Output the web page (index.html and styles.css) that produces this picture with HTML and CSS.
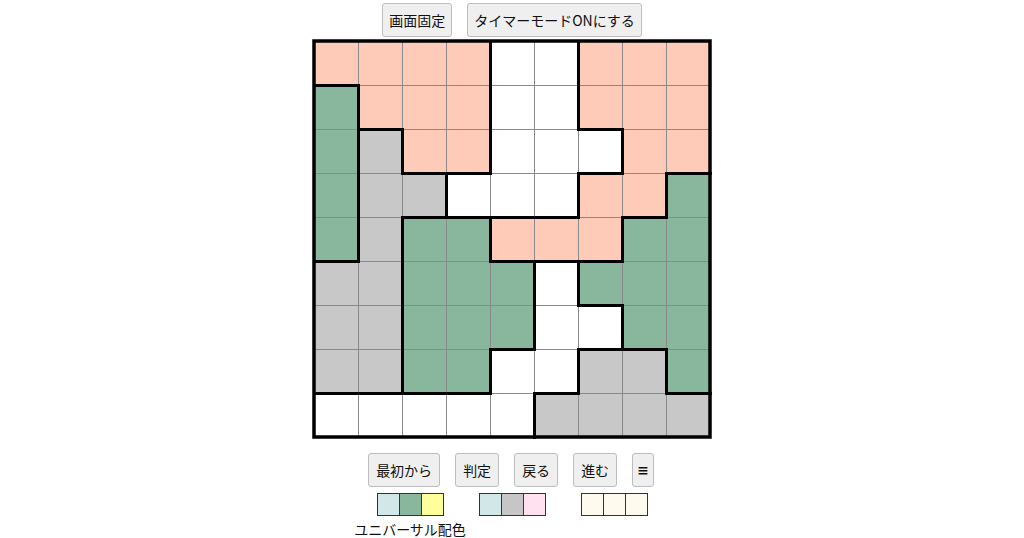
FILE: index.html
```html
<!DOCTYPE html>
<html lang="ja">
<head>
<meta charset="utf-8">
<title>パズル</title>
<link rel="stylesheet" href="styles.css">
</head>
<body>
<div class="page">
  <div class="toolbar top">
    <button class="btn">画面固定</button>
    <button class="btn">タイマーモードONにする</button>
  </div>
  <div class="board" id="board"></div>
  <div class="toolbar bottom">
    <button class="btn">最初から</button>
    <button class="btn">判定</button>
    <button class="btn">戻る</button>
    <button class="btn">進む</button>
    <button class="btn narrow">≡</button>
  </div>
  <div class="palettes">
    <div class="palette">
      <div class="swatches">
        <span class="sw c-cyan"></span><span class="sw c-green"></span><span class="sw c-yellow"></span>
      </div>
      <div class="caption">ユニバーサル配色</div>
    </div>
    <div class="palette">
      <div class="swatches">
        <span class="sw c-cyan"></span><span class="sw c-gray"></span><span class="sw c-pink"></span>
      </div>
    </div>
    <div class="palette">
      <div class="swatches">
        <span class="sw c-cream"></span><span class="sw c-cream"></span><span class="sw c-cream"></span>
      </div>
    </div>
  </div>
</div>
<script src="script.js"></script>
</body>
</html>
```

FILE: styles.css
```css
html, body {
  margin: 0;
  padding: 0;
  background: #ffffff;
}
body {
  font-family: "Noto Sans CJK JP", "Noto Sans", sans-serif;
  color: #000;
}
.page {
  width: 1024px;
  display: flex;
  flex-direction: column;
  align-items: center;
}
.toolbar {
  display: flex;
  justify-content: center;
}
.toolbar.top {
  margin-top: 3px;
  gap: 15px;
}
.toolbar.top .btn {
  padding: 6px 6px;
}
.toolbar.bottom {
  margin-top: 13px;
  gap: 15px;
  margin-left: -2px;
}
.btn {
  font-family: "Noto Sans CJK JP", "Noto Sans", sans-serif;
  font-size: 14px;
  line-height: 20px;
  padding: 6px 7px;
  border: 1px solid #bdbdbd;
  border-radius: 3px;
  background: #efefef;
  color: #111;
  margin: 0;
}
.toolbar.bottom .btn.narrow {
  padding: 6px 4px;
  font-family: "DejaVu Sans", sans-serif;
  font-weight: bold;
}
.board {
  margin-top: 2px;
  width: 400px;
  height: 401px;
}
.board svg {
  display: block;
}
.palettes {
  margin-top: 6px;
  display: flex;
  justify-content: center;
}
.palette {
  width: 102px;
  display: flex;
  flex-direction: column;
  align-items: center;
}
.swatches {
  display: flex;
  border: 1px solid #333;
  background: #333;
  gap: 1px;
}
.sw {
  display: block;
  width: 21px;
  height: 21px;
}
.c-cyan { background: #d2e7e8; }
.c-green { background: #89b79e; }
.c-yellow { background: #ffff9c; }
.c-gray { background: #c6c6c6; }
.c-pink { background: #ffe1ef; }
.c-cream { background: #fffaee; }
.caption {
  margin-top: 3px;
  font-size: 14px;
  line-height: 20px;
  white-space: nowrap;
  color: #111;
}
```

FILE: script.js
```js
(function () {
  var rows = [
    "PPPPWWPPP",
    "GPPPWWPPP",
    "GYPPWWWPP",
    "GYYWWWPPG",
    "GYGGPPPGG",
    "YYGGGWGGG",
    "YYGGGWWGG",
    "YYGGWWYYG",
    "WWWWWYYYY"
  ];
  var colors = { P: "#ffcbb9", G: "#89b79e", Y: "#c8c8c8", W: "#ffffff" };
  var S = 44, O = 2, N = 9;
  var out = [];
  out.push('<svg xmlns="http://www.w3.org/2000/svg" width="400" height="401" viewBox="0 0 400 401">');
  for (var r = 0; r < N; r++) {
    for (var c = 0; c < N; c++) {
      out.push('<rect x="' + (O + c * S) + '" y="' + (O + r * S) + '" width="' + S + '" height="' + S + '" fill="' + colors[rows[r][c]] + '"/>');
    }
  }
  for (var k = 1; k < N; k++) {
    var p = O + k * S + 0.5;
    out.push('<line x1="' + p + '" y1="' + O + '" x2="' + p + '" y2="' + (O + N * S) + '" stroke="#8a8a8a" stroke-width="1"/>');
    out.push('<line x1="' + O + '" y1="' + p + '" x2="' + (O + N * S) + '" y2="' + p + '" stroke="#8a8a8a" stroke-width="1"/>');
  }
  var segs = [];
  for (var r2 = 0; r2 < N; r2++) {
    for (var c2 = 0; c2 < N; c2++) {
      var ch = rows[r2][c2];
      if (c2 < N - 1 && rows[r2][c2 + 1] !== ch) {
        var x = O + (c2 + 1) * S + 0.5;
        segs.push('M' + x + ' ' + (O + r2 * S - 1) + 'V' + (O + (r2 + 1) * S + 2));
      }
      if (r2 < N - 1 && rows[r2 + 1][c2] !== ch) {
        var y = O + (r2 + 1) * S + 0.5;
        segs.push('M' + (O + c2 * S - 1) + ' ' + y + 'H' + (O + (c2 + 1) * S + 2));
      }
    }
  }
  out.push('<path d="' + segs.join(' ') + '" fill="none" stroke="#000" stroke-width="3" stroke-linecap="butt"/>');
  out.push('<rect x="' + O + '" y="' + O + '" width="' + (N * S) + '" height="' + (N * S) + '" fill="none" stroke="#000" stroke-width="3.5"/>');
  out.push('</svg>');
  document.getElementById("board").innerHTML = out.join("");
})();
```
